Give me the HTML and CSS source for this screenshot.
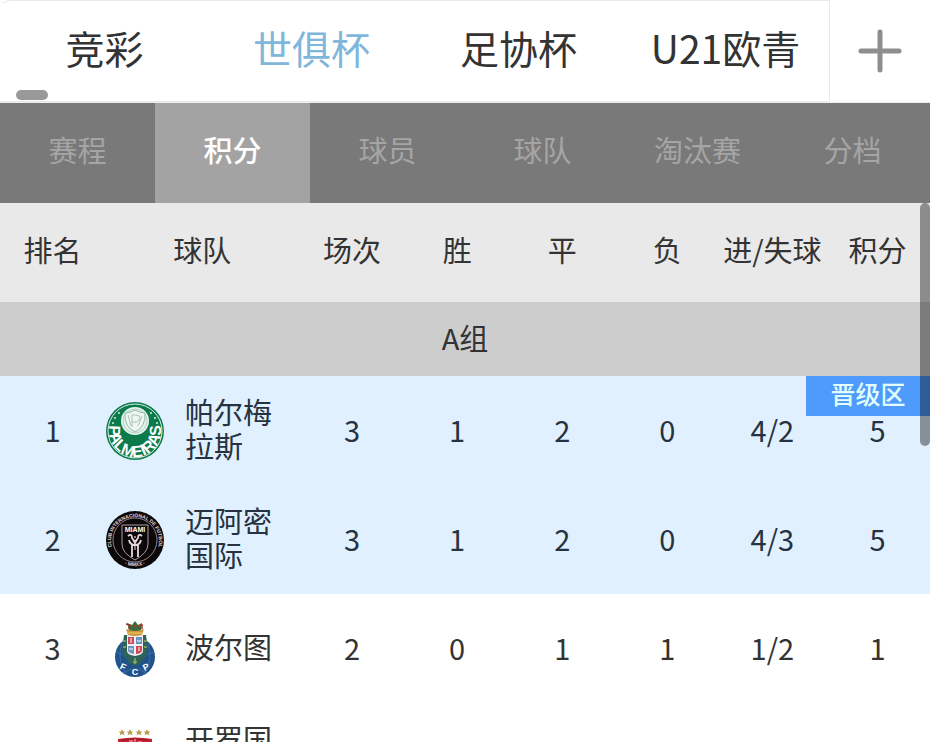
FILE: index.html
```
<!DOCTYPE html>
<html lang="zh-CN">
<head>
    <meta charset="UTF-8">
    <meta name="viewport" content="width=device-width, initial-scale=1.0">
    <title>世俱杯 - 积分</title>
    <link rel="stylesheet" href="styles.css">
</head>
<body>

    <header class="top-bar">
        <nav class="leagues">
            <a href="#jc">竞彩</a>
            <a href="#cwc" class="active">世俱杯</a>
            <a href="#fa">足协杯</a>
            <a href="#u21">U21欧青</a>
            <span class="scroll-mark"></span>
        </nav>
        <button class="add-btn" aria-label="添加">
            <svg width="44" height="44" viewBox="0 0 44 44" fill="none" stroke="#8e8e8e" stroke-width="5" stroke-linecap="round">
                <path d="M22 3v38M3 22h38"/>
            </svg>
        </button>
    </header>

    <nav class="sub-tabs">
        <button>赛程</button>
        <button class="active">积分</button>
        <button>球员</button>
        <button>球队</button>
        <button>淘汰赛</button>
        <button>分档</button>
    </nav>

    <main class="board">
        <div class="board-scroll">
            <table class="standings">
                <colgroup>
                    <col class="col-num">
                    <col>
                    <col class="col-num">
                    <col class="col-num">
                    <col class="col-num">
                    <col class="col-num">
                    <col class="col-num">
                    <col class="col-num">
                </colgroup>
                <thead>
                    <tr>
                        <th>排名</th>
                        <th>球队</th>
                        <th>场次</th>
                        <th>胜</th>
                        <th>平</th>
                        <th>负</th>
                        <th>进/失球</th>
                        <th>积分</th>
                    </tr>
                </thead>
                <tbody>
                    <tr class="group">
                        <td colspan="8">A组</td>
                    </tr>
                    <tr class="qualified">
                        <td>1</td>
                        <td class="team-cell">
                            <div class="team">
                                <svg class="logo" viewBox="0 0 60 60">
                                    <defs><path id="palArc" d="M6 20A26 26 0 1 0 54 20"/></defs>
                                    <circle cx="30" cy="30" r="29" fill="#0d7a4c"/>
                                    <circle cx="30" cy="30" r="27" fill="none" stroke="#d8efe4"/>
                                    <circle cx="30" cy="20" r="14" fill="#e4f3ec"/>
                                    <circle cx="30" cy="20" r="12" fill="none" stroke="#b4d3c4"/>
                                    <path d="M20 12q5 0 10-3 5 3 10 3 1 14-10 19-11-5-10-19z" fill="#edf6f1" stroke="#94b8a6"/>
                                    <path d="M27 26V14h4q4 0 4 3t-4 4h-4M23 14l3 11M37 15l-4 10" fill="none" stroke="#a9c6b8"/>
                                    <g fill="#d8efe4">
                                        <circle cx="14" cy="12" r="1"/><circle cx="10" cy="17" r="1"/><circle cx="8" cy="22" r="1"/>
                                        <circle cx="46" cy="12" r="1"/><circle cx="50" cy="17" r="1"/><circle cx="52" cy="22" r="1"/>
                                    </g>
                                    <text class="pal-text"><textPath href="#palArc" startOffset="50%">PALMEIRAS</textPath></text>
                                </svg>
                                <span class="name">帕尔梅拉斯</span>
                            </div>
                        </td>
                        <td>3</td>
                        <td>1</td>
                        <td>2</td>
                        <td>0</td>
                        <td>4/2</td>
                        <td class="points">5<span class="badge">晋级区</span></td>
                    </tr>
                    <tr class="qualified">
                        <td>2</td>
                        <td class="team-cell">
                            <div class="team">
                                <svg class="logo" viewBox="0 0 60 60">
                                    <defs>
                                        <path id="miaTop" d="M12 47A24 24 0 1 1 48 47"/>
                                        <path id="miaBottom" d="M14 51A27 27 0 0 0 46 51"/>
                                    </defs>
                                    <circle cx="30" cy="30" r="29" fill="#0a0809"/>
                                    <circle cx="30" cy="30" r="22" fill="none" stroke="#b99da6" stroke-width="0.8"/>
                                    <path d="M17 15h26v19q0 9-13 16-13-7-13-16z" fill="#0a0809" stroke="#c5adb4" stroke-width="0.9"/>
                                    <text class="mia-name" x="30" y="22">MIAMI</text>
                                    <g fill="none" stroke="#e8d8dc" stroke-width="1.8">
                                        <path d="M23 26q4-3 4 2l3 4 3-4q0-5 4-2M24 30q1 5 6 5t6-5M27 34v13M33 34v13"/>
                                        <path d="M28 30l2 4 2-4M30 36v4" stroke-width="1"/>
                                    </g>
                                    <circle cx="30" cy="27" r="1" fill="#c5adb4"/>
                                    <text class="mia-ring"><textPath href="#miaTop" startOffset="50%">CLUB INTERNACIONAL DE FUTBOL</textPath></text>
                                    <text class="mia-ring"><textPath href="#miaBottom" startOffset="50%">· MMXX ·</textPath></text>
                                </svg>
                                <span class="name">迈阿密国际</span>
                            </div>
                        </td>
                        <td>3</td>
                        <td>1</td>
                        <td>2</td>
                        <td>0</td>
                        <td>4/3</td>
                        <td>5</td>
                    </tr>
                    <tr>
                        <td>3</td>
                        <td class="team-cell">
                            <div class="team">
                                <svg class="logo" viewBox="0 0 60 60">
                                    <circle cx="30" cy="38" r="20" fill="#20538c"/>
                                    <path d="M11 33q19 8 38 0M17 24q-6 18 5 32M43 24q6 18-5 32M18 54q12-8 24 0" fill="none" stroke="#3f74a5" stroke-width="0.8"/>
                                    <path d="M19 16h22l2 15q-3 12-13 16-10-4-13-16z" fill="#2f6258"/>
                                    <path d="M22 16h16v16q0 4-8 5-8-1-8-5z" fill="#edf0f4"/>
                                    <path d="M23 18h6v7h-6zM31 27h6v5q-2 3-6 3z" fill="#c94a54"/>
                                    <path d="M31 18h6v7h-6zM23 27h6v8q-5-1-6-3z" fill="#6f93bd"/>
                                    <path d="M26 19v5M34 28v4M32 22h4M24 30h4" stroke="#fff"/>
                                    <path d="M21 10q9 3 18 0l-2 6q-7 2-14 0z" fill="#cc973a"/>
                                    <path d="M22 4l5 2 3-4 3 4 4-2-1 7q-6 2-12 0z" fill="#41683c"/>
                                    <path d="M21 5l4 1-1 4M33 7l4-1v4M28 7h3" fill="none" stroke="#a83a2d" stroke-width="1.5"/>
                                    <path d="M22 14h16" stroke="#e7c465" stroke-width="1.2"/>
                                    <path d="M18 22h3M39 22h3M18 28h3M39 28h3M30 39v6M28 43h4" stroke="#91ad62" stroke-width="1.5"/>
                                    <text class="fcp" x="18" y="51" transform="rotate(25 18 48)">F</text>
                                    <text class="fcp" x="30" y="56">C</text>
                                    <text class="fcp" x="41" y="51" transform="rotate(-25 41 48)">P</text>
                                </svg>
                                <span class="name">波尔图</span>
                            </div>
                        </td>
                        <td>2</td>
                        <td>0</td>
                        <td>1</td>
                        <td>1</td>
                        <td>1/2</td>
                        <td>1</td>
                    </tr>
                    <tr>
                        <td>4</td>
                        <td class="team-cell">
                            <div class="team">
                                <svg class="logo" viewBox="0 0 60 60">
                                    <g fill="#b39a45">
                                        <path id="star" d="M17 1l1 2.500h2.500l-2 1.500 1 2.500-2.500-1.500-2.500 1.500 1-2.500-2-1.500H16z"/>
                                        <use href="#star" x="8"/>
                                        <use href="#star" x="17"/>
                                        <use href="#star" x="25"/>
                                    </g>
                                    <path d="M13 11q17-3 34 0v28q-3 12-17 18-14-6-17-18z" fill="#c9202f"/>
                                    <path d="M16 12q14-2 28 0" fill="none" stroke="#8f1c28"/>
                                    <path d="M24 13h4M30 11v5M33 14h4" stroke="#f0c3c5"/>
                                    <path d="M20 24q10 4 20 0l-6 14h-8z" fill="#fff"/>
                                </svg>
                                <span class="name">开罗国民</span>
                            </div>
                        </td>
                        <td>2</td>
                        <td>0</td>
                        <td>1</td>
                        <td>1</td>
                        <td>0/2</td>
                        <td>1</td>
                    </tr>
                </tbody>
            </table>
        </div>
        <span class="scroll-thumb"></span>
    </main>

</body>
</html>
```
FILE: styles.css
```
* {
    box-sizing: border-box;
}
body {
    margin: 0;
    height: 100vh;
    display: flex;
    flex-direction: column;
    overflow: hidden;
    font-family: "Noto Sans CJK SC", sans-serif;
    font-size: 29px;
    line-height: 34px;
    color: #333;
    background: #fff;
}
button {
    font: inherit;
    border: none;
    padding: 0;
    background: none;
    cursor: pointer;
}

/* league bar */
.top-bar {
    display: flex;
    flex: none;
    border-bottom: 1px solid #eee;
}
.leagues {
    position: relative;
    flex: 1;
    display: flex;
    border: 1px solid #e9e9e9;
    border-left-color: #fff;
    border-radius: 10px 0 0 0;
}
.leagues a {
    flex: 1;
    padding: 22px 0 30px;
    font-size: 39px;
    line-height: 48px;
    text-align: center;
    white-space: nowrap;
    color: #333;
    text-decoration: none;
}
.leagues a.active {
    color: #7fb6dc;
}
.scroll-mark {
    position: absolute;
    left: 15px;
    bottom: 1px;
    width: 32px;
    height: 10px;
    border-radius: 5px;
    background: #999;
}
.add-btn {
    width: 100px;
}
.add-btn svg {
    display: block;
    margin: 0 auto;
}

/* sub tabs */
.sub-tabs {
    display: flex;
    flex: none;
    background: #797979;
}
.sub-tabs button {
    flex: 1;
    padding: 29px 0 37px;
    color: #a5a5a5;
}
.sub-tabs button.active {
    color: #fff;
    background: #a3a3a3;
    font-weight: 500;
}

/* standings */
.board {
    position: relative;
    flex: 1;
    min-height: 0;
}
.board-scroll {
    height: 100%;
    overflow-y: auto;
    scrollbar-width: none;
}
.standings {
    width: 100%;
    table-layout: fixed;
    border-collapse: collapse;
    text-align: center;
}
.col-num {
    width: 11.3%;
}
.standings th {
    height: 99px;
    padding: 0 0 8px;
    font-weight: normal;
    white-space: nowrap;
    background: #e9e9e9;
}
.standings td {
    height: 109px;
    padding: 0 0 4px;
}
.standings .group td {
    height: 74px;
    background: #cdcdcd;
}
.standings .team-cell {
    padding: 0;
}
.qualified {
    color: #26323f;
    background: #e0f0ff;
}
.team {
    display: flex;
    align-items: center;
    gap: 20px;
}
.logo {
    flex: none;
    width: 60px;
    height: 60px;
}
.name {
    width: 88px;
    padding-bottom: 5px;
    text-align: left;
}
.points {
    position: relative;
}
.badge {
    position: absolute;
    top: 0;
    right: 0;
    width: 124px;
    padding: 0 0 6px;
    font-size: 25px;
    font-weight: 500;
    color: #e2ffff;
    background: #4f9bfc;
}
.scroll-thumb {
    position: absolute;
    top: 0;
    right: 0;
    width: 10px;
    height: 45%;
    border-radius: 5px;
    background: rgba(0, 0, 0, 0.4);
}

/* lettering inside the club crests */
.pal-text,
.mia-name,
.mia-ring,
.fcp {
    font-family: "Liberation Sans", sans-serif;
    font-weight: bold;
    fill: #fff;
    text-anchor: middle;
}
.pal-text {
    font-family: "Liberation Sans Narrow", "Liberation Sans", sans-serif;
    font-size: 16px;
}
.mia-name {
    font-size: 7px;
}
.mia-ring {
    font-size: 5px;
    fill: #e8d8dc;
}
.fcp {
    font-size: 9px;
}
```
